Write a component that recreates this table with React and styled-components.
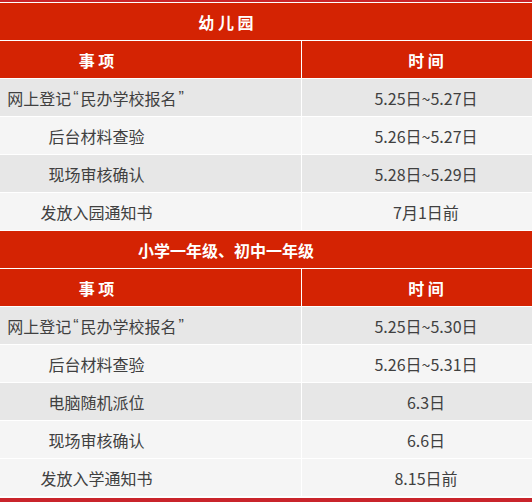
import { Fragment } from 'react';
import styled, { createGlobalStyle } from 'styled-components';

const Global = createGlobalStyle`
  html, body {
    margin: 0;
    padding: 0;
    background: #ffffff;
  }
  body {
    font-family: "Noto Sans CJK SC", "Noto Sans", sans-serif;
  }
`;

const Page = styled.div`
  width: 532px;
  height: 502px;
  overflow: hidden;
  background: #ffffff;
  display: flex;
  flex-direction: column;
`;

const Strip = styled.div`
  height: ${(p) => p.h}px;
  flex: ${(p) => (p.grow ? 1 : 'none')};
  background: #c9242b;
`;

const Table = styled.div`
  display: grid;
  grid-template-columns: 301px 1fr;
  grid-auto-rows: 37px;
  gap: 1px;
  padding: 1px 0 2px;
  background: #ffffff;
`;

const Title = styled.div`
  grid-column: 1 / span 2;
  display: flex;
  align-items: center;
  justify-content: center;
  padding-right: 80px;
  background: #d42303;
  color: #ffffff;
  font-size: 16px;
  font-weight: 700;
`;

const Head = styled.div`
  display: flex;
  align-items: center;
  justify-content: center;
  background: #d42303;
  color: #ffffff;
  font-size: 16px;
  font-weight: 700;
  padding: ${(p) => (p.right ? '0 0 0 18px' : '0 108px 0 0')};
`;

const Cell = styled.div`
  display: flex;
  align-items: center;
  justify-content: center;
  background: ${(p) => (p.shade ? '#e7e7e7' : '#f5f5f5')};
  color: #404040;
  font-size: 16px;
  white-space: nowrap;
  padding: ${(p) => (p.right ? '0 0 0 18px' : '0 108px 0 0')};
`;

const Quote = styled.span`
  font-family: "Liberation Sans", sans-serif;
  margin: 0 2px;
`;

// splits the quoted part so the quote marks stay narrow
const Item = ({ text }) => {
  const parts = text.split(/([“”])/);
  return parts.map((part, i) =>
    part === '“' || part === '”' ? <Quote key={i}>{part}</Quote> : part
  );
};

const sections = [
  {
    title: '幼 儿 园',
    rows: [
      ['网上登记“民办学校报名”', '5.25日~5.27日', true],
      ['后台材料查验', '5.26日~5.27日', false],
      ['现场审核确认', '5.28日~5.29日', true],
      ['发放入园通知书', '7月1日前', false],
    ],
  },
  {
    title: '小学一年级、初中一年级',
    rows: [
      ['网上登记“民办学校报名”', '5.25日~5.30日', true],
      ['后台材料查验', '5.26日~5.31日', false],
      ['电脑随机派位', '6.3日', true],
      ['现场审核确认', '6.6日', false],
      ['发放入学通知书', '8.15日前', false],
    ],
  },
];

export default function App() {
  return (
    <Page>
      <Global />
      <Strip h={2} />
      <Table>
        {sections.map((s) => (
          <Fragment key={s.title}>
            <Title>{s.title}</Title>
            <Head>事 项</Head>
            <Head right>时 间</Head>
            {s.rows.map(([item, time, shade]) => (
              <Fragment key={item + time}>
                <Cell shade={shade}>
                  <Item text={item} />
                </Cell>
                <Cell shade={shade} right>{time}</Cell>
              </Fragment>
            ))}
          </Fragment>
        ))}
      </Table>
      <Strip grow />
    </Page>
  );
}
